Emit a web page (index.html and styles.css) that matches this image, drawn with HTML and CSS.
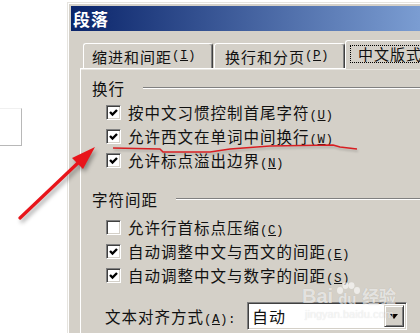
FILE: index.html
```html
<!DOCTYPE html>
<html>
<head>
<meta charset="utf-8">
<link rel="stylesheet" href="styles.css">
</head>
<body>
<div class="desk">
  <div class="side"><div class="sidebox"></div></div>
  <div class="dialog">
    <div class="titlebar">段落</div>
    <div class="dlgbody">
      <div class="tabs">
        <div class="tab t1">缩进和间距<span class="mn">(<u>I</u>)</span></div>
        <div class="tab t2">换行和分页<span class="mn">(<u>P</u>)</span></div>
        <div class="tab sel"><span class="focus">中文版式</span></div>
      </div>
      <div class="panel">
        <div class="group"><span>换行</span><i class="rule"></i></div>
        <div class="row r1"><span class="cb"><svg viewBox="0 0 11 11"><path d="M2 5 L4.5 7.5 L9 3" /></svg></span><span>按中文习惯控制首尾字符<span class="mn">(<u>U</u>)</span></span></div>
        <div class="row"><span class="cb"><svg viewBox="0 0 11 11"><path d="M2 5 L4.5 7.5 L9 3" /></svg></span><span>允许西文在单词中间换行<span class="mn">(<u>W</u>)</span></span></div>
        <div class="row"><span class="cb"><svg viewBox="0 0 11 11"><path d="M2 5 L4.5 7.5 L9 3" /></svg></span><span>允许标点溢出边界<span class="mn">(<u>N</u>)</span></span></div>
        <div class="group g2"><span>字符间距</span><i class="rule"></i></div>
        <div class="row r4"><span class="cb"></span><span>允许行首标点压缩<span class="mn">(<u>C</u>)</span></span></div>
        <div class="row"><span class="cb"><svg viewBox="0 0 11 11"><path d="M2 5 L4.5 7.5 L9 3" /></svg></span><span>自动调整中文与西文的间距<span class="mn">(<u>E</u>)</span></span></div>
        <div class="row"><span class="cb"><svg viewBox="0 0 11 11"><path d="M2 5 L4.5 7.5 L9 3" /></svg></span><span>自动调整中文与数字的间距<span class="mn">(<u>S</u>)</span></span></div>
        <div class="selrow">
          <span class="sellabel">文本对齐方式<span class="mn">(<u>A</u>):</span></span>
          <div class="select"><span class="selval">自动</span><span class="dropbtn"><i class="tri"></i></span></div>
        </div>
      </div>
    </div>
  </div>
</div>

<svg class="anno" width="420" height="333" viewBox="0 0 420 333">
  <g class="shadowed">
    <line x1="20" y1="218" x2="80" y2="161" stroke="#e8151b" stroke-width="3.2" stroke-linecap="round"/>
    <polygon points="95,147 83,169 72,158" fill="#e8151b"/>
  </g>
  <polyline class="wavy" points="113,148 160,149 163,152 210,152 230,149 270,146 333,145 340,147 357,149" fill="none" stroke="#d81e22" stroke-width="1.6" stroke-linejoin="round"/>
</svg>

<div class="wm">
  <div class="wmtop">
    <span class="bai">Bai</span>
    <span class="paw"><svg width="24" height="13" viewBox="0 0 24 13"><ellipse cx="4" cy="8.5" rx="3" ry="3.4"/><ellipse cx="9.5" cy="3.6" rx="3" ry="3.4"/><ellipse cx="15.5" cy="3.6" rx="3" ry="3.4"/><ellipse cx="21" cy="8.5" rx="3" ry="3.4"/></svg><span class="du">du</span></span>
    <span class="jy">经验</span>
  </div>
  <div class="wmurl">jingyan.baidu.com</div>
</div>
</body>
</html>
```
FILE: styles.css
```css
body {
  margin: 0;
  width: 420px;
  height: 333px;
  overflow: hidden;
  background: #fff;
  position: relative;
  font-family: "Noto Sans CJK SC", "Liberation Sans", sans-serif;
  color: #111;
}

.desk {
  display: flex;
  align-items: flex-start;
}

.side {
  width: 67px;
  flex: none;
  padding-top: 108px;
}

.sidebox {
  width: 22px;
  height: 38px;
  box-sizing: border-box;
  border-top: 1px solid #f0f0f0;
  border-right: 1px solid #b8b8b8;
  border-bottom: 1px solid #b8b8b8;
}

.dialog {
  flex: none;
  width: 420px;
  height: 350px;
  box-sizing: border-box;
  margin-top: 2px;
  background: #d4d0c8;
  border: 1px solid;
  border-color: #e6e4df #404040 #404040 #e6e4df;
  box-shadow: inset 1px 1px #fff, inset -1px -1px #808080;
  padding: 3px;
}

.titlebar {
  height: 25px;
  background: linear-gradient(90deg, #0a246a 0, #7b9dd2 349px, #a6caf0 412px);
  color: #fff;
  font-weight: bold;
  font-size: 17px;
  display: flex;
  align-items: center;
  padding-left: 2px;
  letter-spacing: 1px;
}

.dlgbody {
  padding: 9px 0 0 9px;
}

.tabs {
  display: flex;
  align-items: flex-end;
  height: 28px;
  padding-left: 3px;
  position: relative;
  z-index: 2;
}

.tab {
  height: 25px;
  box-sizing: border-box;
  border: 1px solid #fff;
  border-bottom: none;
  border-right-color: #404040;
  box-shadow: inset -1px 0 #808080;
  border-radius: 3px 3px 0 0;
  font-size: 15px;
  letter-spacing: 1px;
  display: flex;
  align-items: center;
  padding-left: 8px;
  background: #d4d0c8;
  white-space: nowrap;
}

.t1 { width: 130px; }
.t2 { width: 131px; margin-left: 1px; padding-left: 10px; }

.sel {
  height: 29px;
  margin-bottom: -1px;
  width: 110px;
  padding-left: 4px;
  padding-bottom: 2px;
}

.focus {
  border: 1px dotted #000;
  padding: 0 8px 0 7px;
  line-height: 16px;
  height: 16px;
}

.mn {
  font-family: "Liberation Mono", monospace;
  font-size: 12.5px;
  letter-spacing: 0.5px;
}

.panel {
  background: #d4d0c8;
  border-top: 1px solid #fff;
  border-left: 1px solid #fff;
  box-shadow: inset 0 1px #e8e6e1;
  height: 300px;
  padding: 9px 0 0 11px;
}

.group {
  display: flex;
  align-items: center;
  height: 20px;
  font-size: 15.5px;
  letter-spacing: 1px;
}

.g2 { margin-top: 17px; }

.rule {
  flex: 1;
  height: 0;
  border-top: 1px solid #808080;
  border-bottom: 1px solid #fff;
  margin-left: 18px;
}

.row {
  display: flex;
  align-items: center;
  height: 24px;
  padding-left: 14px;
  font-size: 15.5px;
  letter-spacing: 1px;
  white-space: nowrap;
}

.r1 { margin-top: 2px; }
.r4 { margin-top: 6px; }

.cb {
  flex: none;
  width: 15px;
  height: 15px;
  box-sizing: border-box;
  background: #fff;
  border: 1px solid;
  border-color: #808080 #fff #fff #808080;
  box-shadow: inset 1px 1px #404040, inset -1px -1px #d4d0c8;
  margin-right: 7px;
  display: flex;
  align-items: center;
  justify-content: center;
}

.cb svg {
  width: 11px;
  height: 11px;
}

.cb path {
  fill: none;
  stroke: #000;
  stroke-width: 2.4;
}

.selrow {
  display: flex;
  align-items: center;
  height: 28px;
  margin-top: 15px;
  padding-left: 13px;
  font-size: 15.5px;
  letter-spacing: 1px;
}

.sellabel {
  width: 142px;
  flex: none;
  white-space: nowrap;
}

.select {
  width: 160px;
  height: 28px;
  box-sizing: border-box;
  background: #fff;
  border: 1px solid;
  border-color: #808080 #fff #fff #808080;
  box-shadow: inset 1px 1px #404040, inset -1px -1px #d4d0c8;
  display: flex;
  align-items: center;
  padding: 2px 2px 2px 4px;
  font-size: 16px;
}

.selval {
  flex: 1;
}

.dropbtn {
  width: 20px;
  height: 22px;
  box-sizing: border-box;
  background: #d4d0c8;
  border: 1px solid;
  border-color: #d4d0c8 #404040 #404040 #d4d0c8;
  box-shadow: inset 1px 1px #fff, inset -1px -1px #808080;
  display: flex;
  align-items: center;
  justify-content: center;
}

.tri {
  width: 0;
  height: 0;
  border-left: 4px solid transparent;
  border-right: 4px solid transparent;
  border-top: 5px solid #000;
}

.anno {
  position: absolute;
  left: 0;
  top: 0;
  pointer-events: none;
}

.shadowed {
  filter: drop-shadow(2px 3px 2px rgba(0, 0, 0, 0.35));
}

.wavy {
  filter: drop-shadow(1px 2px 1px rgba(0, 0, 0, 0.2));
}

.wm {
  position: absolute;
  left: 302px;
  top: 287px;
  color: rgba(255, 255, 255, 0.65);
  text-shadow: 0 0 1px rgba(0, 0, 0, 0.15);
  pointer-events: none;
}

.wmtop {
  display: flex;
  align-items: flex-end;
  height: 18px;
}

.bai {
  font-family: "Liberation Sans", sans-serif;
  font-weight: bold;
  font-size: 20px;
  line-height: 18px;
}

.paw {
  position: relative;
  width: 26px;
  height: 18px;
  margin-left: 2px;
}

.paw svg {
  position: absolute;
  left: 1px;
  top: -5px;
  fill: rgba(255, 255, 255, 0.6);
}

.du {
  position: absolute;
  left: 3px;
  bottom: 0;
  font-family: "Liberation Sans", sans-serif;
  font-weight: bold;
  font-size: 15px;
  line-height: 13px;
}

.jy {
  font-size: 17px;
  line-height: 18px;
  font-weight: bold;
  margin-left: 1px;
}

.wmurl {
  font-family: "Liberation Sans", sans-serif;
  font-size: 11px;
  line-height: 13px;
  margin-left: 3px;
  margin-top: 3px;
}
```
